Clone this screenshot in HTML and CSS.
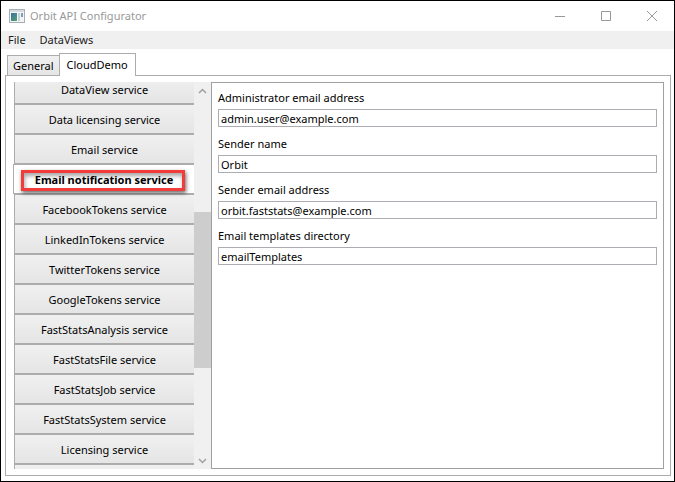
FILE: index.html
```html
<!DOCTYPE html>
<html lang="en">
  <head>
    <meta charset="utf-8">
    <title>Orbit API Configurator</title>
    <link rel="stylesheet" href="styles.css">
  </head>
  <body>
    <div class="window">
      <header class="titlebar">
        <svg class="app-icon" width="16" height="14" viewBox="0 0 16 14">
          <defs>
            <linearGradient id="screen" x1="0" y1="0" x2="1" y2="1">
              <stop offset="0" stop-color="#3f6fa5"/>
              <stop offset="1" stop-color="#4fa36c"/>
            </linearGradient>
          </defs>
          <rect x="0.5" y="0.5" width="15" height="13" fill="#f4f4f4" stroke="#a9b0b5"/>
          <rect x="1" y="1" width="14" height="2" fill="#d5dbe0"/>
          <rect x="2" y="4" width="6" height="8" fill="url(#screen)"/>
          <rect x="9" y="4" width="2" height="8" fill="#c3d0da"/>
          <rect x="12" y="4" width="2" height="4" fill="#7b9cb5"/>
        </svg>
        <span class="title">Orbit API Configurator</span>
        <button class="win-btn" aria-label="Minimize">
          <svg width="10" height="10"><path d="M0 5.5H10"/></svg>
        </button>
        <button class="win-btn" aria-label="Maximize">
          <svg width="10" height="10"><path d="M0.5 0.5H9.5V9.5H0.5Z"/></svg>
        </button>
        <button class="win-btn" aria-label="Close">
          <svg width="10" height="10"><path d="M0 0L10 10M10 0L0 10"/></svg>
        </button>
      </header>

      <nav class="menubar">
        <button>File</button>
        <button>DataViews</button>
      </nav>

      <main class="content">
        <div class="tabs" role="tablist">
          <button class="tab" role="tab">General</button>
          <button class="tab active" role="tab" aria-selected="true">CloudDemo</button>
        </div>

        <div class="tab-panel">
          <div class="services">
            <div class="service-list">
              <button>DataView service</button>
              <button>Data licensing service</button>
              <button>Email service</button>
              <button class="selected">Email notification service<span class="highlight"></span></button>
              <button>FacebookTokens service</button>
              <button>LinkedInTokens service</button>
              <button>TwitterTokens service</button>
              <button>GoogleTokens service</button>
              <button>FastStatsAnalysis service</button>
              <button>FastStatsFile service</button>
              <button>FastStatsJob service</button>
              <button>FastStatsSystem service</button>
              <button>Licensing service</button>
              <button>&nbsp;</button>
            </div>
          </div>

          <div class="scrollbar">
            <button class="arrow" aria-label="Scroll up">
              <svg width="9" height="6"><path d="M1 5L4.5 1.5L8 5"/></svg>
            </button>
            <div class="track">
              <div class="before"></div>
              <div class="thumb"></div>
              <div class="after"></div>
            </div>
            <button class="arrow" aria-label="Scroll down">
              <svg width="9" height="6"><path d="M1 1L4.5 4.5L8 1"/></svg>
            </button>
          </div>

          <form class="settings">
            <label for="admin-email">Administrator email address</label>
            <input type="text" id="admin-email" value="admin.user@example.com">
            <label for="sender-name">Sender name</label>
            <input type="text" id="sender-name" value="Orbit">
            <label for="sender-email">Sender email address</label>
            <input type="text" id="sender-email" value="orbit.faststats@example.com">
            <label for="templates">Email templates directory</label>
            <input type="text" id="templates" value="emailTemplates">
          </form>
        </div>
      </main>
    </div>
  </body>
</html>
```
FILE: styles.css
```css
* {
  box-sizing: border-box;
}
body {
  margin: 0;
  font-family: "Noto Sans", "Open Sans", sans-serif;
  font-size: 11px;
  line-height: 16px;
  color: #000;
}
button, input {
  font: inherit;
  color: inherit;
  margin: 0;
  padding: 0;
  border: none;
  background: none;
  border-radius: 0;
}
svg {
  fill: none;
}
.window {
  display: flex;
  flex-direction: column;
  height: 100vh;
  border: 1px solid #000;
  background: #fff;
}

/* title bar */
.titlebar {
  display: flex;
  align-items: center;
  height: 30px;
  padding-left: 8px;
  color: #999;
}
.title {
  flex: 1;
  margin-left: 5px;
}
.win-btn {
  display: flex;
  align-items: center;
  justify-content: center;
  width: 46px;
  height: 30px;
  padding-left: 2px;
}
.win-btn svg {
  stroke: #999;
}

/* menu */
.menubar {
  display: flex;
  gap: 14px;
  height: 18px;
  padding: 1px 7px;
  background: #f0f0f0;
  color: #212121;
}

/* tabs */
.content {
  flex: 1;
  display: flex;
  flex-direction: column;
  min-height: 0;
  padding: 4px 3px 5px 4px;
}
.tabs {
  display: flex;
  align-items: flex-end;
  padding-left: 2px;
}
.tab {
  height: 20px;
  padding: 0 5px;
  border: 1px solid #acacac;
  border-width: 1px 0 0 1px;
  background: linear-gradient(#f0f0f0, #e5e5e5);
}
.tab.active {
  height: 23px;
  padding: 0 7px;
  border-right-width: 1px;
  margin-bottom: -1px;
  background: #fff;
  z-index: 1;
}
.tab-panel {
  flex: 1;
  display: flex;
  min-height: 0;
  padding: 6px 6px 6px 7px;
  border: 1px solid #acacac;
}

/* service list */
.services {
  flex: 0 0 181px;
  overflow: hidden;
}
.service-list {
  display: flex;
  flex-direction: column;
  margin-top: -8px; /* scrolled part way down */
}
.service-list button {
  flex: none;
  height: 30px;
  margin-left: 1px;
  padding-top: 2px;
  border: 1px solid #acacac;
  border-right: none;
  background: linear-gradient(#f0f0f0, #e5e5e5);
}
.service-list .selected {
  position: relative;
  margin-left: 0;
  background: #fff;
  font-weight: bold;
}
.highlight {
  position: absolute;
  top: 5px;
  left: 7px;
  right: 9px;
  height: 21px;
  border: 3px solid #f23c3c;
  box-shadow: 1px 2px 4px rgba(0, 0, 0, 0.6), inset 1px 3px 4px rgba(0, 0, 0, 0.35);
}

/* scrollbar */
.scrollbar {
  flex: 0 0 17px;
  display: flex;
  flex-direction: column;
  background: #f0f0f0;
}
.arrow {
  display: flex;
  align-items: center;
  justify-content: center;
  height: 17px;
}
.arrow svg {
  stroke: #a0a0a0;
  stroke-width: 1.5;
}
.track {
  flex: 1;
  display: flex;
  flex-direction: column;
}
.before {
  flex: 113;
}
.thumb {
  flex: 156;
  background: #cdcdcd;
}
.after {
  flex: 84;
}

/* settings */
.settings {
  flex: 1;
  display: flex;
  flex-direction: column;
  padding: 7px 6px;
  border: 1px solid #a0a0a0;
}
.settings label {
  margin-bottom: 3px;
}
.settings input {
  height: 18px;
  margin-bottom: 9px;
  padding: 0 2px;
  border: 1px solid #abadb3;
}
```
